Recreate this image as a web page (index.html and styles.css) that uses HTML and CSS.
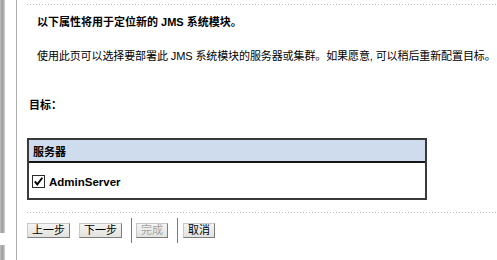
FILE: index.html
```html
<!DOCTYPE html>
<html lang="zh-CN">
<head>
<meta charset="utf-8">
<title>JMS 系统模块目标</title>
<link rel="stylesheet" href="styles.css">
</head>
<body>
<div class="edge"><div class="edge-top"></div><div class="edge-bottom"></div></div>
<div class="rule-v"></div>
<main class="main">
  <div class="dots"></div>
  <h1 class="heading">以下属性将用于定位新的 JMS 系统模块。</h1>
  <p class="intro">使用此页可以选择要部署此 JMS 系统模块的服务器或集群。如果愿意, 可以稍后重新配置目标。</p>
  <div class="label">目标：</div>
  <div class="grid">
    <div class="grid-head">服务器</div>
    <div class="grid-row">
      <svg class="check" width="13" height="13" viewBox="0 0 13 13" aria-hidden="true">
        <rect x="0.5" y="0.5" width="12" height="12" fill="#fff" stroke="#2a2a2a"/>
        <path d="M2.8 6.4 L5.3 9.4 L10.3 2.8" fill="none" stroke="#000" stroke-width="1.9"/>
      </svg>
      <span class="server">AdminServer</span>
    </div>
  </div>
  <div class="dots dots-low"></div>
  <div class="actions">
    <button class="btn btn-prev">上一步</button>
    <button class="btn btn-next">下一步</button>
    <span class="sep sep-a"></span>
    <button class="btn btn-finish" disabled>完成</button>
    <span class="sep sep-b"></span>
    <button class="btn">取消</button>
  </div>
</main>
</body>
</html>
```

FILE: styles.css
```css
html, body {
  margin: 0;
  padding: 0;
  background: #fff;
}
body {
  display: flex;
  height: 260px;
  overflow: hidden;
  font-family: "Liberation Sans", "Noto Sans CJK SC", sans-serif;
  font-size: 11px;
  color: #000;
}
.edge {
  width: 5px;
  display: flex;
  flex-direction: column;
  gap: 12px;
}
.edge-top, .edge-bottom {
  background: linear-gradient(to right, #c4c4c4, #9a9a9a 45%, #d0d0d0);
}
.edge-top { height: 233px; }
.edge-bottom { flex: 1; }
.rule-v {
  margin-left: 11px;
  width: 1px;
  background: #aeaeae;
}
.main {
  flex: 1;
  min-width: 0;
  padding: 4px 0 0 10px;
}
.dots {
  height: 1px;
  background: repeating-linear-gradient(to right, #bdbdbd 0 1px, transparent 1px 3px);
}
.heading {
  margin: 9px 0 0;
  padding-left: 10px;
  font-size: 11px;
  font-weight: bold;
  line-height: 16px;
  white-space: nowrap;
}
.intro {
  margin: 18px 0 0;
  padding-left: 10px;
  line-height: 16px;
  white-space: nowrap;
  letter-spacing: -0.1px;
}
.label {
  margin-top: 33px;
  padding-left: 2px;
  line-height: 16px;
  font-weight: bold;
}
.grid {
  margin-top: 25px;
  width: 400px;
  box-sizing: border-box;
  border: 2px solid #3a3a3a;
}
.grid-head {
  height: 21px;
  display: flex;
  align-items: center;
  padding-left: 4px;
  background: #cfdcee;
  border-bottom: 2px solid #161616;
  font-weight: bold;
}
.grid-row {
  height: 35px;
  box-sizing: border-box;
  padding: 2px 0 0 3px;
  display: flex;
  align-items: center;
  gap: 4px;
}
.check { display: block; }
.server {
  font-weight: bold;
  font-size: 11.5px;
}
.dots-low { margin-top: 12px; }
.actions {
  margin-top: 5px;
  height: 25px;
  display: flex;
  align-items: center;
}
.btn {
  height: 15px;
  box-sizing: border-box;
  margin: 0;
  padding: 0 4px;
  font-family: inherit;
  font-size: 11px;
  line-height: 13px;
  color: #000;
  background: linear-gradient(#f4f4f2, #e2e2de);
  border: 1px solid;
  border-color: #c8c8c8 #7c7c7c #7c7c7c #c8c8c8;
  border-radius: 0;
}
.btn-finish { color: #a2a2a2; }
.btn-prev { margin-right: 9px; }
.btn-next { margin-right: 9px; }
.sep {
  width: 1px;
  height: 25px;
  background: #7a7a7a;
}
.sep-a { margin-right: 4px; }
.btn-finish { margin-right: 9px; }
.sep-b { margin-right: 5px; }
```
